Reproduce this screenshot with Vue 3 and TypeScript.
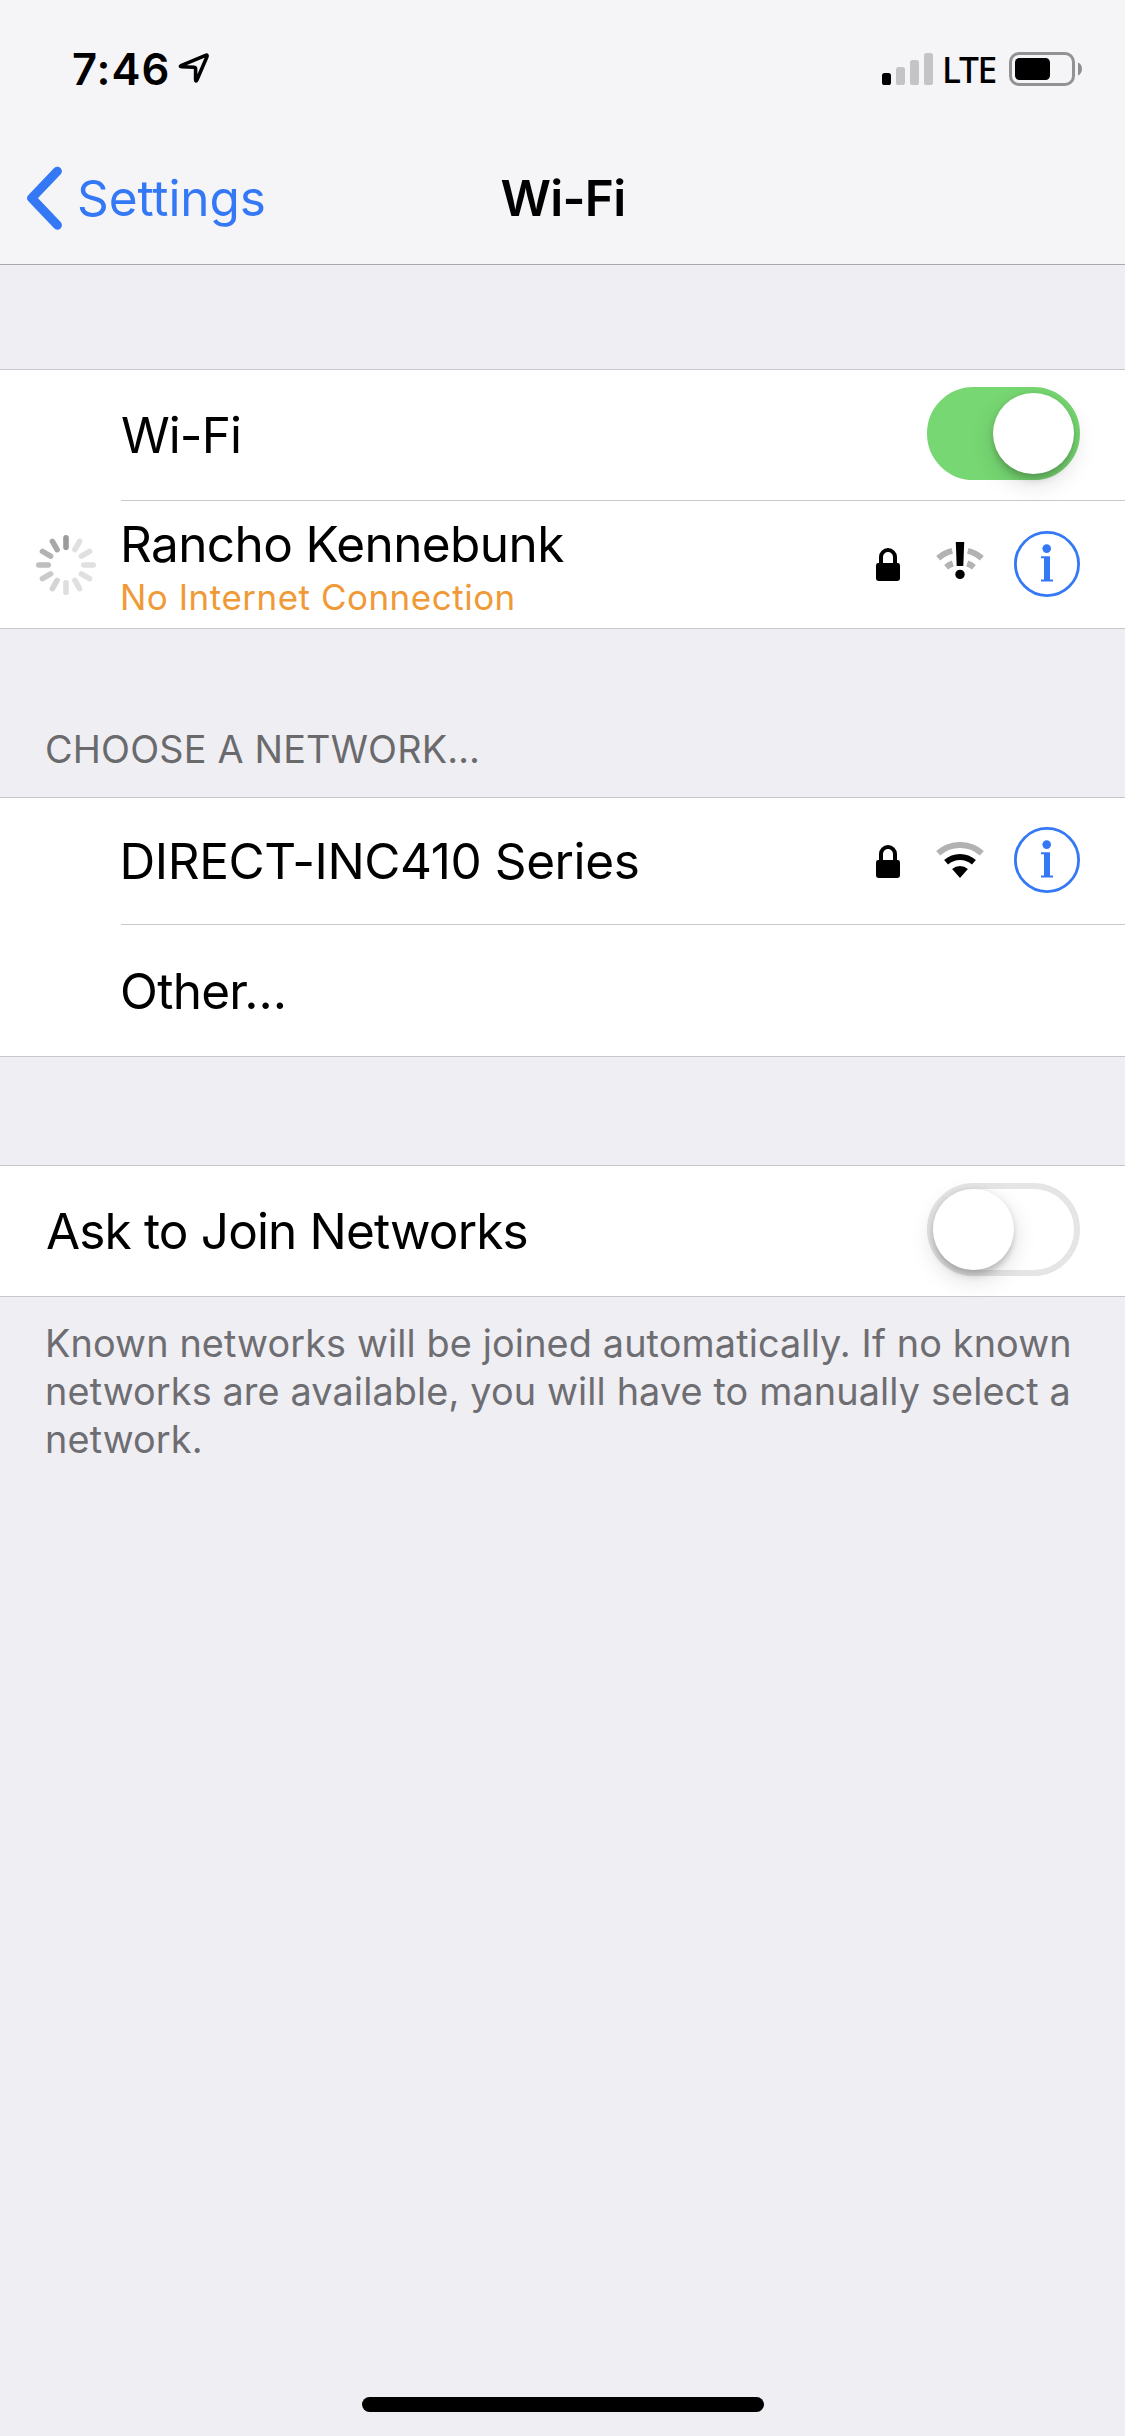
<script setup lang="ts">
import { ref } from 'vue'

const wifiOn = ref(true)
const askToJoin = ref(false)

// Spinner spokes, clockwise from twelve o'clock
const spokes: string[] = [
  '#9b9b9b', '#e0e0e0', '#e0e0e0', '#e0e0e0', '#e0e0e0', '#e0e0e0',
  '#dedede', '#d4d4d4', '#cacaca', '#bebebe', '#b3b3b3', '#a8a8a8',
]

const bars = [
  { x: 0, h: 12, on: true },
  { x: 14, h: 18, on: false },
  { x: 28, h: 25, on: false },
  { x: 42, h: 32, on: false },
]
</script>

<template>
  <div class="screen">
    <header class="header">
      <div class="status">
        <div class="status-left">
          <span class="clock">7:46</span>
          <svg class="location" width="32" height="32" viewBox="0 0 32 32">
            <path
              d="M28.2 3.2 L3.6 13.4 Q1 14.6 3.8 14.8 L16 15.2 Q17.6 15.3 17.6 17 L17.6 27.6 Q17.8 30.4 19 27.8 L29 4.6 Q29.4 2.8 28.2 3.2 Z"
              fill="none" stroke="#000" stroke-width="3.6" stroke-linejoin="round"
            />
          </svg>
        </div>
        <div class="status-right">
          <svg width="51" height="33" viewBox="0 0 51 33">
            <rect
              v-for="b in bars" :key="b.x" :x="b.x" :y="33 - b.h" width="9" :height="b.h" rx="2.6"
              :fill="b.on ? '#000' : '#c4c4c6'"
            />
          </svg>
          <span class="carrier">LTE</span>
          <svg class="battery" width="74" height="34" viewBox="0 0 74 34">
            <rect x="1.5" y="1.5" width="63" height="31" rx="8.5" fill="none" stroke="#929294" stroke-width="3" />
            <rect x="6" y="6" width="35" height="22" rx="4.5" fill="#000" />
            <path d="M69 10.6 C74.3 12.5 74.3 21.5 69 23.4 Z" fill="#8e8e90" />
          </svg>
        </div>
      </div>
      <nav class="nav">
        <a class="back">
          <svg width="40" height="66" viewBox="0 0 40 66">
            <path d="M33.4 6.2 L7.7 33.2 L33.4 60.2" fill="none" stroke="#3478f6" stroke-width="9" stroke-linecap="round" stroke-linejoin="round" />
          </svg>
          <span>Settings</span>
        </a>
        <h1 class="title">Wi-Fi</h1>
      </nav>
    </header>

    <section class="group first">
      <div class="row indent">
        <span class="label tight">Wi-Fi</span>
        <button class="toggle" :class="{ on: wifiOn }" @click="wifiOn = !wifiOn"><i class="knob"></i></button>
      </div>
      <div class="row current">
        <div class="spinner-cell">
          <svg width="60" height="60" viewBox="-30 -30 60 60">
            <rect
              v-for="(c, i) in spokes" :key="i" x="-2.8" y="-30" width="5.6" height="15" rx="2.8"
              :fill="c" :transform="`rotate(${i * 30})`"
            />
          </svg>
        </div>
        <div class="names">
          <span class="label rancho">Rancho Kennebunk</span>
          <span class="warning">No Internet Connection</span>
        </div>
        <div class="icons">
          <svg class="lock" width="24" height="33" viewBox="0 0 24 33">
            <path d="M5 17 V9 A7 7 0 0 1 19 9 V17" fill="none" stroke="#000" stroke-width="4" />
            <rect y="15" width="24" height="18" rx="2.4" />
          </svg>
          <svg class="signal weak" width="48" height="38" viewBox="-24 -41 48 38">
            <g fill="none" stroke="#b2b2b2" stroke-width="6">
              <path d="M-21.8 -24.8 A33 33 0 0 1 -7.8 -32.1" />
              <path d="M7.8 -32.1 A33 33 0 0 1 21.8 -24.8" />
              <path d="M-13.9 -15.8 A21 21 0 0 1 -7.2 -19.7" />
              <path d="M7.2 -19.7 A21 21 0 0 1 13.9 -15.8" />
            </g>
            <path d="M-4.2 -41 H4.2 L3.3 -17 H-3.3 Z" />
            <circle cx="0" cy="-8.6" r="4.7" />
          </svg>
          <svg class="info" width="66" height="66" viewBox="0 0 66 66">
            <circle cx="33" cy="33" r="31.6" fill="none" stroke="#3478f6" stroke-width="2.8" />
            <circle cx="32.7" cy="17.6" r="4.3" fill="#3478f6" />
            <path d="M27 25.3 H36 V48.6 H39 V50.6 H27 V48.6 H30 V27.2 H27 Z" fill="#3478f6" />
          </svg>
        </div>
      </div>
    </section>

    <h2 class="section-title">CHOOSE A NETWORK…</h2>

    <section class="group">
      <div class="row indent short">
        <span class="label direct">DIRECT-INC410 Series</span>
        <div class="icons">
          <svg class="lock" width="24" height="33" viewBox="0 0 24 33">
            <path d="M5 17 V9 A7 7 0 0 1 19 9 V17" fill="none" stroke="#000" stroke-width="4" />
            <rect y="15" width="24" height="18" rx="2.4" />
          </svg>
          <svg class="signal" width="48" height="36" viewBox="-24 -36 48 36">
            <path d="M-21.8 -24.8 A33 33 0 0 1 21.8 -24.8" fill="none" stroke="#b2b2b2" stroke-width="6" />
            <path d="M-13.9 -15.8 A21 21 0 0 1 13.9 -15.8" fill="none" stroke="#000" stroke-width="6" />
            <path d="M0 0 L-7.9 -9 A12 12 0 0 1 7.9 -9 Z" />
          </svg>
          <svg class="info" width="66" height="66" viewBox="0 0 66 66">
            <circle cx="33" cy="33" r="31.6" fill="none" stroke="#3478f6" stroke-width="2.8" />
            <circle cx="32.7" cy="17.6" r="4.3" fill="#3478f6" />
            <path d="M27 25.3 H36 V48.6 H39 V50.6 H27 V48.6 H30 V27.2 H27 Z" fill="#3478f6" />
          </svg>
        </div>
      </div>
      <div class="row other">
        <span class="label">Other…</span>
      </div>
    </section>

    <section class="group ask">
      <div class="row">
        <span class="label join">Ask to Join Networks</span>
        <button class="toggle" :class="{ on: askToJoin }" @click="askToJoin = !askToJoin"><i class="knob"></i></button>
      </div>
    </section>

    <p class="footnote">
      Known networks will be joined automatically. If no known networks are available, you will have to manually select a network.
    </p>

    <div class="home-bar"></div>
  </div>
</template>

<style>
body {
  background: #efeef3;
}
</style>

<style scoped>
.screen {
  display: flex;
  flex-direction: column;
  box-sizing: border-box;
  width: 1125px;
  height: 2436px;
  padding-bottom: 24px;
  overflow: hidden;
  background: #efeef3;
  color: #000;
  font-family: Inter, 'Liberation Sans', sans-serif;
  font-feature-settings: 'calt' 0;
}
svg {
  display: block;
  flex: none;
}

/* Header */
.header {
  height: 264px;
  background: #f5f5f8;
  border-bottom: 1px solid #a9a9ac;
}
.status {
  display: flex;
  justify-content: space-between;
  height: 132px;
}
.status-left {
  display: flex;
  align-items: flex-start;
  padding: 40px 0 0 72px;
}
.clock {
  font-size: 43.6px;
  font-weight: 600;
  line-height: 60px;
  letter-spacing: 0.97px;
}
.location {
  margin: 12px 0 0 8px;
}
.status-right {
  display: flex;
  align-items: flex-start;
  padding: 52px 42px 0 0;
}
.carrier {
  width: 76px;
  padding-left: 9px;
  box-sizing: border-box;
  font-family: 'Noto Sans', 'Open Sans', sans-serif;
  font-size: 35.4px;
  font-weight: 500;
  line-height: 34px;
  letter-spacing: -1.3px;
}
.nav {
  display: grid;
  grid-template-columns: 1fr auto 1fr;
  align-items: center;
  height: 132px;
}
.back {
  display: flex;
  align-items: center;
  padding-left: 24px;
  color: #3478f6;
  font-size: 49.5px;
  line-height: 60px;
  letter-spacing: -0.1px;
}
.back span {
  margin-left: 13px;
}
.title {
  margin: 0 -0.8px 0 0;
  font-size: 49.5px;
  font-weight: 600;
  line-height: 60px;
  letter-spacing: -0.7px;
}

/* Grouped rows */
.group {
  background: #fff;
  border-top: 1px solid #c8c7cc;
  border-bottom: 1px solid #c8c7cc;
}
.group.first {
  margin-top: 104px;
}
.row {
  display: flex;
  align-items: center;
  justify-content: space-between;
  height: 130px;
  padding: 0 45px 0 46px;
}
.row.indent {
  height: 131px;
  margin-left: 121px;
  padding-left: 0;
  box-sizing: border-box;
  border-bottom: 1px solid #c8c7cc;
}
.row.indent.short {
  height: 127px;
}
.row.current {
  height: 127px;
  padding-left: 36px;
}
.row.other {
  height: 131px;
  padding-left: 120px;
}
.label {
  font-size: 49.5px;
  line-height: 60px;
  letter-spacing: -0.7px;
  white-space: nowrap;
}
.label.tight {
  letter-spacing: -0.95px;
}
.label.rancho {
  letter-spacing: -0.6px;
}
.label.direct {
  margin-left: -1.5px;
  letter-spacing: -0.4px;
}
.label.join {
  letter-spacing: -0.85px;
}
.spinner-cell {
  width: 84px;
  padding-top: 1px;
}
.names {
  display: flex;
  flex: 1;
  flex-direction: column;
  padding-top: 3px;
}
.warning {
  margin-top: 2px;
  color: #f09a37;
  font-size: 35px;
  line-height: 42px;
  letter-spacing: 0.5px;
}
.icons {
  display: flex;
  align-items: center;
}
.signal {
  margin: 0 30px 2px 36px;
}
.signal.weak {
  margin-bottom: 7px;
}
.info {
  margin-bottom: 2px;
}

/* Switch */
.toggle {
  display: flex;
  box-sizing: border-box;
  width: 153px;
  height: 93px;
  margin: 0 0 3px;
  padding: 0;
  background: #fff;
  border: 6px solid #e5e5e5;
  border-radius: 47px;
}
.toggle.on {
  justify-content: flex-end;
  background: #77d772;
  border-color: #77d772;
}
.knob {
  width: 81px;
  height: 81px;
  background: #fff;
  border-radius: 50%;
  box-shadow: 0 9px 24px rgba(0, 0, 0, 0.14), 0 9px 6px -2px rgba(0, 0, 0, 0.09), 0 2px 6px rgba(0, 0, 0, 0.14);
}

.section-title {
  height: 168px;
  box-sizing: border-box;
  margin: 0;
  padding: 95px 45px 0;
  color: #6a6a6c;
  font-size: 37.8px;
  font-weight: 400;
  line-height: 50px;
  letter-spacing: 0.19px;
}
.group.ask {
  margin-top: 108px;
}
.footnote {
  margin: 0;
  padding: 22px 40px 0 45px;
  color: #6d6d72;
  font-size: 37.8px;
  line-height: 48px;
  letter-spacing: 0.13px;
}
.home-bar {
  align-self: center;
  width: 402px;
  height: 15px;
  margin-top: auto;
  border-radius: 8px;
  background: #000;
}
</style>
